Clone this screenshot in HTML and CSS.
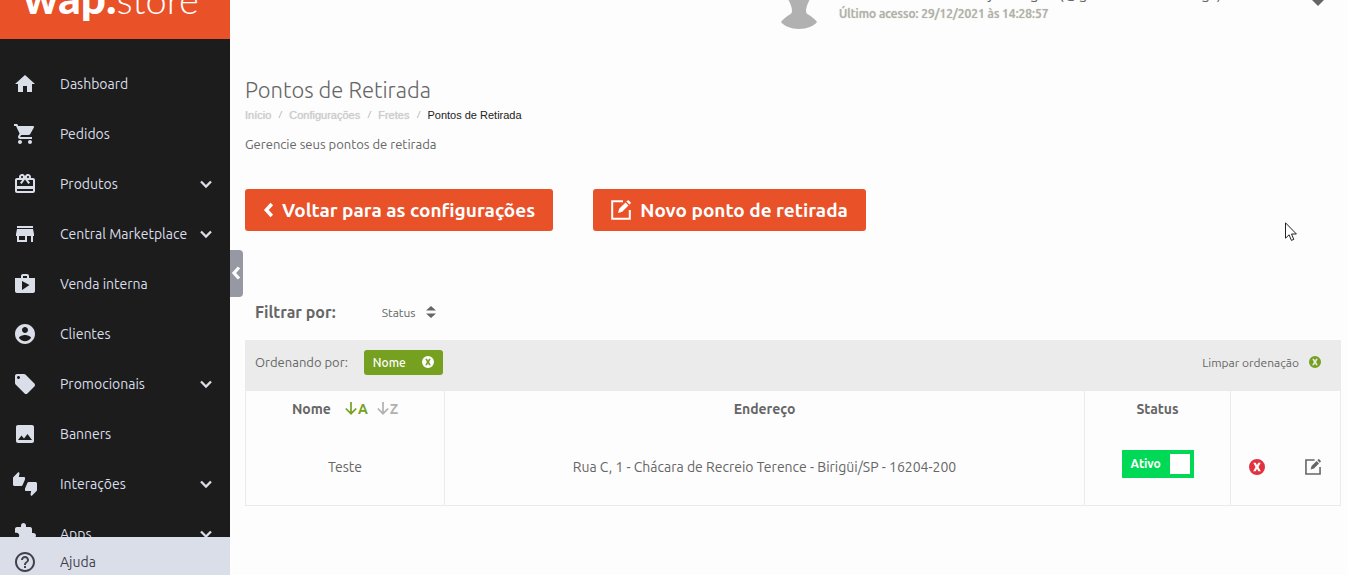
FILE: index.html
```html
<!DOCTYPE html>
<html lang="pt-BR">
<head>
    <meta charset="UTF-8" />
    <meta name="viewport" content="width=device-width, initial-scale=1.0" />
    <title>Pontos de Retirada</title>
    <link rel="stylesheet" href="styles.css">
</head>
<body>

    <!-- Shared icons -->
    <svg class="sprite" aria-hidden="true">
        <symbol id="i-down" viewBox="0 0 24 24"><path d="M7 9.500l5 5 5-5" fill="none" stroke="currentColor" stroke-width="2.300"/></symbol>
        <symbol id="i-left" viewBox="0 0 10 14"><path d="M8 1.500L3 7l5 5.500" fill="none" stroke="currentColor" stroke-width="3.200"/></symbol>
        <symbol id="i-edit" viewBox="0 0 20 20"><path d="M12 1.200H1.200v17.600h17.600V10" fill="none" stroke="currentColor" stroke-width="2"/><path d="M7 13l1.200-4.200 6.300-6.300 3 3-6.300 6.300zM15.400 1.600l1.200-1.200q.6-.5 1.200 0l1.800 1.800q.5.6 0 1.200l-1.200 1.200z" fill="currentColor"/></symbol>
        <symbol id="i-x" viewBox="0 0 16 16"><path fill-rule="evenodd" fill="currentColor" d="M8 0a8 8 0 1 0 0 16A8 8 0 0 0 8 0zM4.300 3.800h2.500L8 6.200l1.200-2.400h2.500L9.500 8l2.300 4.200H9.300L8 9.800l-1.300 2.400H4.200L6.500 8z"/></symbol>
        <symbol id="i-arrow" viewBox="0 0 12 13"><path d="M6 0v11.500M.8 6.500L6 11.700l5.200-5.200" fill="none" stroke="currentColor" stroke-width="1.700"/></symbol>
    </svg>

    <aside class="sidebar">
        <a href="#" class="brand"><b>wap.</b><span>store</span></a>
        <nav class="menu">
            <a href="#" class="menu-item">
                <svg viewBox="0 0 24 24"><path d="M10 20v-6h4v6h5v-8h3L12 3 2 12h3v8z"/></svg>
                <span>Dashboard</span>
            </a>
            <a href="#" class="menu-item">
                <svg viewBox="0 0 24 24"><path d="M7 18c-1.100 0-1.990.9-1.990 2S5.900 22 7 22s2-.9 2-2-.9-2-2-2zM1 2v2h2l3.600 7.590-1.350 2.450c-.16.28-.25.61-.25.96 0 1.100.9 2 2 2h12v-2H7.420c-.14 0-.25-.11-.25-.25l.03-.12.9-1.630h7.450c.75 0 1.410-.41 1.750-1.030l3.580-6.490c.08-.14.12-.31.12-.48 0-.55-.45-1-1-1H5.210l-.94-2H1zm16 16c-1.100 0-1.990.9-1.990 2s.89 2 1.990 2 2-.9 2-2-.9-2-2-2z"/></svg>
                <span>Pedidos</span>
            </a>
            <a href="#" class="menu-item">
                <svg viewBox="0 0 24 24"><path d="M20 6h-2.180c.11-.31.18-.65.18-1 0-1.660-1.340-3-3-3-1.050 0-1.960.54-2.500 1.350l-.5.67-.5-.68C10.960 2.540 10.050 2 9 2 7.340 2 6 3.340 6 5c0 .35.07.69.18 1H4c-1.110 0-1.990.89-1.990 2L2 19c0 1.110.89 2 2 2h16c1.110 0 2-.89 2-2V8c0-1.110-.89-2-2-2zm-5-2c.55 0 1 .45 1 1s-.45 1-1 1-1-.45-1-1 .45-1 1-1zM9 4c.55 0 1 .45 1 1s-.45 1-1 1-1-.45-1-1 .45-1 1-1zm11 15H4v-2h16v2zm0-5H4V8h5.080L7 10.830 8.620 12 11 8.760l1-1.360 1 1.360L15.380 12 17 10.830 14.920 8H20v6z"/></svg>
                <span>Produtos</span>
                <svg class="chevron"><use href="#i-down"/></svg>
            </a>
            <a href="#" class="menu-item">
                <svg viewBox="0 0 24 24"><path d="M20 4H4v2h16V4zm1 10v-2l-1-5H4l-1 5v2h1v6h10v-6h4v6h2v-6h1zm-9 4H6v-4h6v4z"/></svg>
                <span>Central Marketplace</span>
                <svg class="chevron"><use href="#i-down"/></svg>
            </a>
            <a href="#" class="menu-item">
                <svg viewBox="0 0 24 24"><path d="M16 6V4c0-1.110-.89-2-2-2h-4c-1.110 0-2 .89-2 2v2H2v13c0 1.110.89 2 2 2h16c1.110 0 2-.89 2-2V6h-6zm-6-2h4v2h-4V4zM9 18V9l7.500 4L9 18z"/></svg>
                <span>Venda interna</span>
            </a>
            <a href="#" class="menu-item">
                <svg viewBox="0 0 24 24"><path d="M12 2C6.480 2 2 6.480 2 12s4.480 10 10 10 10-4.480 10-10S17.520 2 12 2zm0 3c1.660 0 3 1.340 3 3s-1.340 3-3 3-3-1.340-3-3 1.340-3 3-3zm0 14.200c-2.500 0-4.710-1.280-6-3.220.03-1.990 4-3.080 6-3.080 1.990 0 5.970 1.090 6 3.080-1.290 1.940-3.500 3.220-6 3.220z"/></svg>
                <span>Clientes</span>
            </a>
            <a href="#" class="menu-item">
                <svg viewBox="0 0 24 24"><path d="M21.410 11.580l-9-9C12.050 2.220 11.550 2 11 2H4c-1.100 0-2 .9-2 2v7c0 .55.22 1.050.59 1.420l9 9c.36.36.86.58 1.410.58.55 0 1.050-.22 1.410-.59l7-7c.37-.36.59-.86.59-1.410 0-.55-.23-1.060-.59-1.420zM5.500 7C4.670 7 4 6.330 4 5.500S4.670 4 5.500 4 7 4.670 7 5.500 6.330 7 5.500 7z"/></svg>
                <span>Promocionais</span>
                <svg class="chevron"><use href="#i-down"/></svg>
            </a>
            <a href="#" class="menu-item">
                <svg viewBox="0 0 24 24"><path d="M21 19V5c0-1.100-.9-2-2-2H5c-1.100 0-2 .9-2 2v14c0 1.100.9 2 2 2h14c1.100 0 2-.9 2-2zM8.500 13.500l2.500 3.010L14.500 12l4.500 6H5l3.500-4.500z"/></svg>
                <span>Banners</span>
            </a>
            <a href="#" class="menu-item">
                <svg viewBox="0 0 24 24"><path d="M12 6c0-.55-.45-1-1-1H5.820l.66-3.180.02-.23c0-.31-.13-.59-.33-.8L5.380 0 .44 4.940C.17 5.210 0 5.590 0 6v6.500c0 .83.67 1.500 1.500 1.500h6.750c.62 0 1.150-.38 1.380-.91l2.260-5.290c.07-.17.11-.36.11-.55V6zm10.500 4h-6.750c-.62 0-1.150.38-1.380.91l-2.260 5.290c-.07.17-.11.36-.11.55V18c0 .55.45 1 1 1h5.180l-.66 3.180-.02.24c0 .31.13.59.33.8l.79.78 4.940-4.940c.27-.27.44-.65.44-1.060v-6.500c0-.83-.67-1.500-1.500-1.500z"/></svg>
                <span>Interações</span>
                <svg class="chevron"><use href="#i-down"/></svg>
            </a>
            <a href="#" class="menu-item">
                <svg viewBox="0 0 24 24"><path d="M20.500 11H19V7c0-1.100-.9-2-2-2h-4V3.500C13 2.120 11.880 1 10.500 1S8 2.120 8 3.500V5H4c-1.100 0-1.990.9-1.990 2v3.800H3.500c1.490 0 2.700 1.210 2.700 2.700s-1.210 2.700-2.700 2.700H2V20c0 1.100.9 2 2 2h3.800v-1.500c0-1.490 1.210-2.700 2.700-2.700 1.490 0 2.700 1.210 2.700 2.700V22H17c1.100 0 2-.9 2-2v-4h1.500c1.380 0 2.500-1.120 2.500-2.500S21.880 11 20.500 11z"/></svg>
                <span>Apps</span>
                <svg class="chevron"><use href="#i-down"/></svg>
            </a>
        </nav>
        <div class="help">
            <a href="#" class="menu-item">
                <svg viewBox="0 0 24 24"><path d="M11 18h2v-2h-2v2zm1-16C6.480 2 2 6.480 2 12s4.480 10 10 10 10-4.480 10-10S17.520 2 12 2zm0 18c-4.410 0-8-3.590-8-8s3.590-8 8-8 8 3.590 8 8-3.590 8-8 8zm0-14c-2.210 0-4 1.790-4 4h2c0-1.100.9-2 2-2s2 .9 2 2c0 2-3 1.750-3 5h2c0-2.250 3-2.500 3-5 0-2.210-1.790-4-4-4z"/></svg>
                <span>Ajuda</span>
            </a>
        </div>
    </aside>
    <button class="collapse-btn" aria-label="Recolher menu"><svg><use href="#i-left"/></svg></button>

    <main class="content">
        <header class="topbar">
            <svg class="avatar" viewBox="0 0 40 50"><path d="M6 12a13 12 0 0 1 26 0c0 5-2 8-3 10-2 4-3 7-3 10 0 2 1 3 3 4 3 2 6 4 8 7-3 4-10 7-18 7S4 47 1 43c2-3 5-5 8-7 2-1 3-2 3-4 0-3-1-6-3-10-1-2-3-5-3-10z"/></svg>
            <div class="user">
                <span class="user-name">Administradora da loja Borges (@gerenciamentologs)</span>
                <span class="user-access">Último acesso: 29/12/2021 às 14:28:57</span>
            </div>
            <button class="user-menu" aria-label="Menu do usuário"><svg viewBox="0 0 20 14"><path d="M2 2h16v3l-8 8-8-8z"/></svg></button>
        </header>

        <h1>Pontos de Retirada</h1>
        <nav class="breadcrumb">
            <a href="#">Início</a><i>/</i><a href="#">Configurações</a><i>/</i><a href="#">Fretes</a><i>/</i><span>Pontos de Retirada</span>
        </nav>
        <p class="description">Gerencie seus pontos de retirada</p>

        <div class="actions">
            <a href="#" class="btn"><svg class="icon-left"><use href="#i-left"/></svg>Voltar para as configurações</a>
            <a href="#" class="btn"><svg class="icon-edit"><use href="#i-edit"/></svg>Novo ponto de retirada</a>
        </div>

        <div class="filters">
            <label for="filter-status">Filtrar por:</label>
            <div class="select">
                <select id="filter-status">
                    <option>Status</option>
                </select>
                <svg viewBox="0 0 10 12"><path d="M5 0l5 4.500H0zM5 12l5-4.500H0z"/></svg>
            </div>
        </div>

        <div class="sort-bar">
            <span>Ordenando por:</span>
            <button class="tag">Nome <svg><use href="#i-x"/></svg></button>
            <button class="clear-sort">Limpar ordenação <svg><use href="#i-x"/></svg></button>
        </div>

        <table class="points-table">
            <thead>
                <tr>
                    <th class="col-name">
                        <div class="sortable">
                            Nome
                            <button class="sort active"><svg><use href="#i-arrow"/></svg>A</button>
                            <button class="sort"><svg><use href="#i-arrow"/></svg>Z</button>
                        </div>
                    </th>
                    <th>Endereço</th>
                    <th class="col-status">Status</th>
                    <th class="col-actions"></th>
                </tr>
            </thead>
            <tbody>
                <tr>
                    <td>Teste</td>
                    <td>Rua C, 1 - Chácara de Recreio Terence - Birigüi/SP - 16204-200</td>
                    <td class="cell-status">
                        <label class="switch"><input type="checkbox" checked><span>Ativo</span></label>
                    </td>
                    <td>
                        <div class="row-actions">
                            <button class="remove" aria-label="Excluir"><svg><use href="#i-x"/></svg></button>
                            <button aria-label="Editar"><svg><use href="#i-edit"/></svg></button>
                        </div>
                    </td>
                </tr>
            </tbody>
        </table>
    </main>

    <svg class="pointer" viewBox="0 0 12 20"><path d="M.5.800v15.400l3.600-3.400 2.300 5.600 2.400-1-2.300-5.400h4.900z"/></svg>

</body>
</html>
```
FILE: styles.css
```css
* {
    box-sizing: border-box;
}

body {
    margin: 0;
    display: flex;
    min-height: 100vh;
    position: relative;
    background-color: #fdfdfd;
    color: #666;
    font-family: Ubuntu, "Noto Sans", sans-serif;
    font-size: 14px;
}

a {
    color: inherit;
    text-decoration: none;
}

button {
    padding: 0;
    border: none;
    background: none;
    color: inherit;
    font: inherit;
    cursor: pointer;
}

svg {
    display: block;
    flex: none;
}

.sprite {
    display: none;
}

/* Sidebar */
.sidebar {
    display: flex;
    flex-direction: column;
    flex: none;
    width: 230px;
    height: 100vh;
    overflow: hidden;
    background-color: #1c1c1c;
    color: #dadee9;
}

.brand {
    display: flex;
    flex: none;
    align-items: baseline;
    align-content: flex-end;
    flex-wrap: wrap;
    height: 39px;
    padding: 0 0 16px 23px;
    overflow: hidden;
    background-color: #e95129;
    color: #fff;
    font-family: Lato, sans-serif;
    font-size: 38px;
    font-weight: 300;
    line-height: 48px;
}

.brand b {
    font-size: 44px;
    font-weight: 900;
}

.menu {
    flex: 1;
    min-height: 0;
    padding-top: 20px;
    overflow: hidden;
}

.menu-item {
    display: flex;
    align-items: center;
    height: 50px;
    padding: 0 12px 0 13px;
}

.menu-item svg {
    width: 24px;
    height: 24px;
    fill: currentColor;
}

.menu-item span {
    margin-left: 23px;
    white-space: nowrap;
}

.menu-item .chevron {
    margin-left: auto;
}

.help {
    flex: none;
    height: 38px;
    overflow: hidden;
    background-color: #dadee9;
    color: #3f414d;
}

.collapse-btn {
    position: absolute;
    top: 250px;
    left: 230px;
    display: flex;
    align-items: center;
    justify-content: center;
    width: 13px;
    height: 47px;
    padding: 0 1px 2px 0;
    border-radius: 0 4px 4px 0;
    background-color: #9699a3;
    color: #fff;
}

.collapse-btn svg {
    width: 10px;
    height: 14px;
}

/* Content */
.content {
    flex: 1;
    min-width: 0;
    padding: 0 7px 0 15px;
}

.topbar {
    display: flex;
    align-items: flex-end;
    justify-content: flex-end;
    height: 29px;
    padding-right: 13px;
    overflow: hidden;
}

.avatar {
    width: 40px;
    height: 50px;
    fill: #b1b1b1;
}

.user {
    display: flex;
    flex-direction: column;
    gap: 2px;
    width: 488px;
    padding: 0 0 6px 19px;
    white-space: nowrap;
}

.user-name {
    font-size: 16px;
    line-height: 20px;
}

.user-access {
    color: #b1b1a9;
    font-size: 12px;
    font-weight: 500;
    line-height: 18px;
    text-shadow: 0 0 1px #b1b1a9;
}

.user-menu {
    padding-bottom: 22px;
}

.user-menu svg {
    width: 20px;
    height: 14px;
    fill: #666;
}

h1 {
    margin: 46px 0 0;
    font-family: Ubuntu, "Open Sans", sans-serif;
    font-size: 22px;
    font-weight: 300;
    line-height: 30px;
}

.breadcrumb {
    display: flex;
    margin-top: 2px;
    color: #ccc;
    font-family: "Liberation Sans", Arial, sans-serif;
    font-size: 11px;
    line-height: 16px;
}

.breadcrumb a {
    text-shadow: 0 0 1px #ccc;
}

.breadcrumb i {
    width: 18px;
    color: #aaa;
    font-size: 9px;
    text-align: center;
}

.breadcrumb span {
    color: #222;
}

.description {
    margin: 11px 0 0;
    font-size: 13px;
    line-height: 20px;
}

.actions {
    display: flex;
    gap: 40px;
    margin-top: 35px;
}

.btn {
    display: flex;
    align-items: center;
    height: 42px;
    padding: 0 18px;
    border-radius: 3px;
    background-color: #e95129;
    color: #fff;
    font-size: 19px;
    font-weight: 600;
}

.icon-left {
    width: 11px;
    height: 16px;
    margin-right: 8px;
}

.icon-edit {
    width: 20px;
    height: 20px;
    margin-right: 9px;
}

.filters {
    display: flex;
    align-items: center;
    gap: 46px;
    margin-top: 66px;
    padding-left: 10px;
    height: 30px;
}

.filters label {
    font-size: 16px;
    font-weight: 600;
}

.select {
    display: grid;
    align-items: center;
}

.select select,
.select svg {
    grid-area: 1 / 1;
}

.select select {
    width: 54px;
    padding: 0;
    border: none;
    background: none;
    color: inherit;
    font: inherit;
    font-size: 12px;
    appearance: none;
}

.select svg {
    justify-self: end;
    width: 10px;
    height: 12px;
    fill: currentColor;
    pointer-events: none;
}

.sort-bar {
    display: flex;
    align-items: center;
    height: 50px;
    margin-top: 13px;
    padding: 0 20px 6px 10px;
    background-color: #ebebeb;
    font-size: 13px;
}

.sort-bar svg {
    width: 12px;
    height: 12px;
}

.tag {
    display: flex;
    align-items: center;
    gap: 16px;
    height: 25px;
    margin-left: 16px;
    padding: 0 9px;
    border-radius: 3px;
    background-color: #75a020;
    color: #fff;
    font-size: 12px;
    font-weight: 500;
}

.clear-sort {
    display: flex;
    align-items: center;
    gap: 10px;
    margin-left: auto;
    font-size: 12px;
}

.clear-sort svg {
    color: #75a020;
}

/* Table */
.points-table {
    width: 100%;
    table-layout: fixed;
    border-collapse: collapse;
    border: 1px solid #ebebeb;
    text-align: center;
}

.points-table th,
.points-table td {
    padding: 0;
    border-right: 1px solid #ebebeb;
}

.points-table th {
    height: 38px;
    padding-bottom: 2px;
    font-weight: 600;
}

.points-table td {
    height: 77px;
}

.points-table .cell-status {
    padding-bottom: 6px;
}

.col-name {
    width: 199px;
}

.col-status {
    width: 146px;
}

.col-actions {
    width: 110px;
}

.sortable {
    display: flex;
    align-items: center;
    justify-content: center;
    gap: 9px;
}

.sort {
    display: flex;
    align-items: center;
    color: #b1b1b1;
}

.sort.active {
    margin-left: 5px;
    color: #75a020;
}

.sort svg {
    width: 12px;
    height: 13px;
    margin-right: 1px;
}

.switch {
    display: inline-flex;
    align-items: center;
    justify-content: space-between;
    flex-direction: row-reverse;
    width: 72px;
    height: 28px;
    padding: 4px 4px 4px 9px;
    background-color: #00d955;
    color: #fff;
    font-size: 12px;
    font-weight: 600;
    vertical-align: middle;
    cursor: pointer;
}

.switch input {
    width: 20px;
    height: 20px;
    margin: 0;
    background-color: #fff;
    appearance: none;
}

.row-actions {
    display: flex;
    align-items: center;
    justify-content: space-between;
    padding: 0 19px 0 18px;
}

.row-actions svg {
    width: 16px;
    height: 16px;
}

.row-actions .remove {
    color: #e3323f;
}

/* Mouse pointer */
.pointer {
    position: absolute;
    top: 222px;
    left: 1285px;
    width: 12px;
    height: 20px;
    fill: #fff;
    stroke: #222;
}
```
